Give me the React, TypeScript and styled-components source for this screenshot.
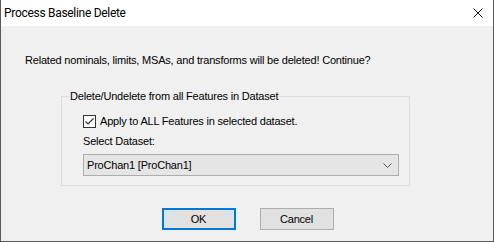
import styled, { createGlobalStyle } from 'styled-components'

/**
 * Global
 */
const GlobalStyle = createGlobalStyle`
  html, body {
    margin: 0;
    padding: 0;
    background: #f0f0f0;
  }
  * {
    box-sizing: border-box;
  }
`

/**
 * Component
 */
const App = () => {
  return (
    <>
      <GlobalStyle />
      <Window>
        <TitleBar>
          <Title>Process Baseline Delete</Title>
          <CloseButton aria-label='Close'>
            <svg width='10' height='10' viewBox='0 0 10 10'>
              <path d='M0.5 0.5 L9.5 9.5 M9.5 0.5 L0.5 9.5' stroke='#111' strokeWidth='1' fill='none' />
            </svg>
          </CloseButton>
        </TitleBar>
        <Body>
          <Message>Related nominals, limits, MSAs, and transforms will be deleted! Continue?</Message>
          <Group>
            <Legend>Delete/Undelete from all Features in Dataset</Legend>
            <GroupContent>
              <CheckRow>
                <CheckBox>
                  <svg width='11' height='11' viewBox='0 0 11 11'>
                    <path d='M1.5 5.5 L4 8 L9.5 2.5' stroke='#333' strokeWidth='1.2' fill='none' />
                  </svg>
                </CheckBox>
                <Label>Apply to ALL Features in selected dataset.</Label>
              </CheckRow>
              <FieldLabel>Select Dataset:</FieldLabel>
              <Combo>
                <Label>ProChan1 [ProChan1]</Label>
                <svg width='9' height='5' viewBox='0 0 9 5'>
                  <path d='M0.5 0.5 L4.5 4.5 L8.5 0.5' stroke='#555' strokeWidth='1' fill='none' />
                </svg>
              </Combo>
            </GroupContent>
          </Group>
          <ButtonRow>
            <DialogButton $primary>OK</DialogButton>
            <DialogButton>Cancel</DialogButton>
          </ButtonRow>
        </Body>
      </Window>
    </>
  )
}

/**
 * Styled Component
 */
const Window = styled.div`
  width: 494px;
  height: 242px;
  display: flex;
  flex-direction: column;
  background: #f0f0f0;
  border: 1px solid #5a5a5a;
  border-top: none;
  font-family: "Liberation Sans", Arial, sans-serif;
  font-size: 11px;
  letter-spacing: -0.2px;
  color: #000;
`

const TitleBar = styled.div`
  height: 26px;
  flex-shrink: 0;
  background: #fff;
  display: flex;
  align-items: center;
  justify-content: space-between;
  padding-left: 3px;
`

const Title = styled.span`
  font-family: Roboto, "Noto Sans", sans-serif;
  font-size: 12px;
  letter-spacing: -0.3px;
  color: #000;
`

const CloseButton = styled.div`
  width: 46px;
  height: 26px;
  display: flex;
  align-items: center;
  justify-content: center;
  padding-left: 16px;
`

const Body = styled.div`
  flex: 1;
  display: flex;
  flex-direction: column;
  padding: 28px 0 0 24px;
`

const Message = styled.div`
  line-height: 13px;
  height: 13px;
  white-space: nowrap;
`

const Group = styled.fieldset`
  margin: 23px 0 0 36px;
  width: 349px;
  height: 96px;
  padding: 12px 0 0 0;
  border: 1px solid #dcdcdc;
  border-radius: 0;
`

const Legend = styled.legend`
  padding: 0 1px;
  margin-left: 7px;
  line-height: 13px;
`

const GroupContent = styled.div`
  display: flex;
  flex-direction: column;
  align-items: flex-start;
  padding-left: 21px;
`

const CheckRow = styled.div`
  display: flex;
  align-items: center;
  gap: 4px;
  height: 13px;
`

const CheckBox = styled.div`
  width: 13px;
  height: 13px;
  border: 1px solid #333;
  background: #fff;
  display: flex;
  align-items: center;
  justify-content: center;
`

const Label = styled.span`
  line-height: 13px;
  white-space: nowrap;
`

const FieldLabel = styled(Label)`
  margin-top: 7px;
`

const Combo = styled.div`
  margin-top: 6px;
  width: 316px;
  height: 22px;
  border: 1px solid #adadad;
  background: #e5e5e5;
  display: flex;
  align-items: center;
  justify-content: space-between;
  padding: 0 6px 0 3px;
`

const ButtonRow = styled.div`
  display: flex;
  justify-content: center;
  gap: 24px;
  margin-top: 22px;
  margin-left: -23px;
`

const DialogButton = styled.div<{ $primary?: boolean }>`
  width: 74px;
  height: 22px;
  display: flex;
  align-items: center;
  justify-content: center;
  background: #e1e1e1;
  border: ${(p) => (p.$primary ? '2px solid #0078d7' : '1px solid #adadad')};
`

export default App
